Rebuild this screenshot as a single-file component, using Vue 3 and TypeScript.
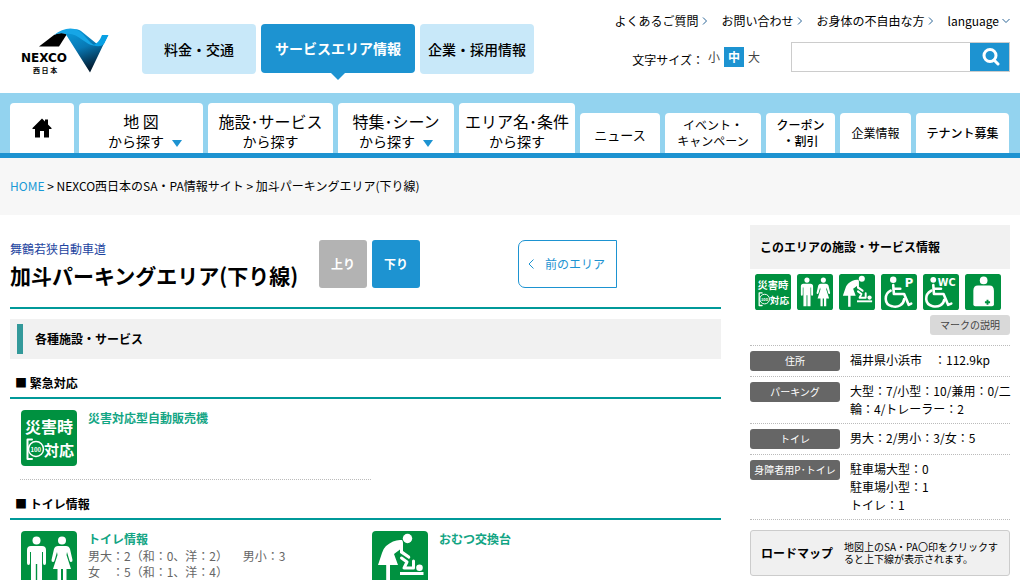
<script setup lang="ts">
import { ref, h, type FunctionalComponent } from 'vue'

type IconName = 'disaster' | 'toilet' | 'diaper' | 'parking' | 'wc' | 'ostomate'

interface NavItem {
  lines: string[]
  size: string
  grow: number
  arrow?: boolean
}

const keyword = ref('')

const helpLinks = ['よくあるご質問', 'お問い合わせ', 'お身体の不自由な方']

const navItems: NavItem[] = [
  { lines: ['地 図', 'から探す'], size: 'tall map', grow: 124, arrow: true },
  { lines: ['施設･サービス', 'から探す'], size: 'tall', grow: 125 },
  { lines: ['特集･シーン', 'から探す'], size: 'tall', grow: 116, arrow: true },
  { lines: ['エリア名･条件', 'から探す'], size: 'tall', grow: 116 },
  { lines: ['ニュース'], size: 'short news', grow: 80 },
  { lines: ['イベント・', 'キャンペーン'], size: 'short', grow: 96 },
  { lines: ['クーポン', '・割引'], size: 'short strong', grow: 69 },
  { lines: ['企業情報'], size: 'short', grow: 71 },
  { lines: ['テナント募集'], size: 'short strong', grow: 93 },
]

const areaIcons: { name: IconName; label: string }[] = [
  { name: 'disaster', label: '災害対応型自動販売機' },
  { name: 'toilet', label: 'トイレ' },
  { name: 'diaper', label: 'おむつ交換台' },
  { name: 'parking', label: '身障者用駐車場' },
  { name: 'wc', label: '身障者用トイレ' },
  { name: 'ostomate', label: 'オストメイト' },
]

const details = [
  { label: '住所', lines: ['福井県小浜市　：112.9kp'] },
  { label: 'パーキング', lines: ['大型：7/小型：10/兼用：0/二', '輪：4/トレーラー：2'] },
  { label: 'トイレ', lines: ['男大：2/男小：3/女：5'] },
  { label: '身障者用P･トイレ', lines: ['駐車場大型：0', '駐車場小型：1', 'トイレ：1'] },
]

const sections: {
  title: string
  ruled: boolean
  items: { icon: IconName; name: string; lines: string[] }[]
}[] = [
  {
    title: '緊急対応',
    ruled: true,
    items: [{ icon: 'disaster', name: '災害対応型自動販売機', lines: [] }],
  },
  {
    title: 'トイレ情報',
    ruled: false,
    items: [
      {
        icon: 'toilet',
        name: 'トイレ情報',
        lines: ['男大：2（和：0、洋：2） 　男小：3', '女　：5（和：1、洋：4）'],
      },
      { icon: 'diaper', name: 'おむつ交換台', lines: [] },
    ],
  },
]

const p = (d: string) => h('path', { d, fill: '#fff' })
const c = (cx: number, cy: number, r: number) => h('circle', { cx, cy, r, fill: '#fff' })
const s = (d: string, w: number) =>
  h('path', { d, fill: 'none', stroke: '#fff', 'stroke-width': w, 'stroke-linecap': 'round', 'stroke-linejoin': 'round' })
const t = (x: number, y: number, size: number, text: string, family?: string) =>
  h('text', { x, y, 'font-size': size, 'font-family': family, 'font-weight': 700, fill: '#fff' }, text)

const wheelchair = () => [
  c(19, 9, 5),
  s('M19 17 L20 31 L36 31 L43 48 L47 46', 4),
  s('M20 23 L30 23', 4),
  s('M15 26 C5 31 4 47 17 50 C26 53 35 48 36 39', 4),
]

const drawings: Record<IconName, () => ReturnType<typeof h>[]> = {
  disaster: () => [
    t(4, 23, 16, '災害時'),
    t(23, 46, 15, '対応'),
    s('M11 29.5 L6.500 29.5 L6.500 49 L11 49', 2),
    h('circle', { cx: 15, cy: 39, r: 7.5, fill: 'none', stroke: '#fff', 'stroke-width': 1.5 }),
    t(9.5, 42, 6, '100'),
  ],
  toilet: () => [
    c(15.5, 9.5, 4),
    p('M10 15 H21 Q25 15 25 19 V32 Q25 34 23.5 34 Q22 34 22 32 V21 H21 V50 H16.2 V33 H14.8 V50 H10 V21 H9 V32 Q9 34 7.5 34 Q6 34 6 32 V19 Q6 15 10 15Z'),
    c(41, 9.5, 4),
    p('M37 15 H45 Q48 15 49 18 L51.5 29 Q51.7 31 50 31 Q49 31 48.5 29.5 L46 21 L45.5 24 L50 38 H45.5 V50 H42 V38 H40 V50 H36.5 V38 H32 L36.5 24 L36 21 L33.5 29.5 Q33 31 32 31 Q30.3 31 30.5 29 L33 18 Q34 15 37 15Z'),
  ],
  diaper: () => [
    c(35.5, 7.5, 4.7),
    p('M30 9 Q22 8 14 15 Q11 18 10 22 L6 34 H14.2 V51 H18 V34 H26 L22 23 L28 18.5 V22 L37 28 Q39 27 38 25 L31 20 L31 12 Q31 10 30 9Z'),
    s('M29.5 27 L35 31 L32 37 H41.5 V30', 3),
    c(47.5, 36.7, 3.3),
    p('M28 41 H51.5 V44 H28Z'),
  ],
  parking: () => [...wheelchair(), t(37, 20, 18, 'P', 'DejaVu Sans')],
  wc: () => [
    c(16, 9, 4.5),
    s('M16 17 L17 31 L32 31 L39 48 L44 46', 4),
    s('M17 23 L28 23', 4),
    s('M13 26 C2 32 2 47 15 50 C24 52 32 48 33 40', 4),
    t(23, 19, 15, 'WC', 'DejaVu Sans'),
  ],
  ostomate: () => [
    c(29, 10, 6),
    p('M20 18 H38 Q45 18 45 26 V47 Q45 50 42 50 H16 Q13 50 13 47 V26 Q13 18 20 18Z'),
    h('path', { d: 'M35 40 V48 M31 44 H39', stroke: '#009140', 'stroke-width': 3 }),
  ],
}

const ServiceIcon: FunctionalComponent<{ name: IconName; label?: string }> = (props) =>
  h(
    'svg',
    { viewBox: '0 0 56 56', role: 'img', 'aria-label': props.label },
    [h('rect', { width: 56, height: 56, rx: 4, fill: '#009140' }), ...drawings[props.name]()],
  )
ServiceIcon.props = ['name', 'label']
</script>

<template>
  <div class="page">
    <header class="header">
      <a class="logo" href="#" aria-label="NEXCO 西日本">
        <svg viewBox="0 0 90 48" width="90" height="48">
          <defs>
            <linearGradient id="ribbon" x1="0" y1="0" x2="0.35" y2="1">
              <stop offset="0" stop-color="#0a9fe0" />
              <stop offset="0.5" stop-color="#0878b4" />
              <stop offset="1" stop-color="#031c30" />
            </linearGradient>
          </defs>
          <path d="M18 20.500 L33 9 Q39 5.500 46 8 L38 20.500Z" fill="#000" />
          <path d="M44 7 C50 3 56 2 60 5 L76 18 Q82 16 84 11 L87 9 L69 46.500Z" fill="url(#ribbon)" />
          <path d="M33 9 C41 3 50 0 58 5 C64 9 68 17 74 19.500 C66 21 57 6 45 8 Q39 6 33 9Z" fill="#16a6e6" />
          <path d="M72 19 Q78 17 81 9 H87.500 L83 18 Q79 22 72 19Z" fill="#08a0e4" />
          <text class="logo-name" x="0" y="36">NEXCO</text>
          <text class="logo-sub" x="12" y="47">西 日 本</text>
        </svg>
      </a>
      <nav class="site-tabs" aria-label="サイト">
        <a href="#" class="site-tab">料金・交通</a>
        <a href="#" class="site-tab current">サービスエリア情報</a>
        <a href="#" class="site-tab">企業・採用情報</a>
      </nav>
      <div class="tools">
        <div class="help">
          <a v-for="link in helpLinks" :key="link" href="#">{{ link }}
            <svg width="6" height="8" viewBox="0 0 6 8"><path d="M1 .5 4.500 4 1 7.500" /></svg>
          </a>
          <a class="language" href="#">language
            <svg width="8" height="6" viewBox="0 0 8 6"><path d="M.5 1 4 4.500 7.500 1" /></svg>
          </a>
        </div>
        <div class="controls">
          <div class="sizes" role="group" aria-label="文字サイズ">
            <span class="sizes-label">文字サイズ：</span>
            <button type="button">小</button>
            <button type="button" class="on">中</button>
            <button type="button">大</button>
          </div>
          <form class="search" role="search" @submit.prevent>
            <input v-model="keyword" type="text" aria-label="サイト内検索" />
            <button type="submit" aria-label="検索">
              <svg width="18" height="18" viewBox="0 0 18 18">
                <circle cx="8" cy="7.500" r="6" />
                <path d="M12 12 16 16" />
              </svg>
            </button>
          </form>
        </div>
      </div>
    </header>

    <nav class="nav" aria-label="メイン">
      <a href="#" class="tab home" :style="{ flexGrow: 64 }" aria-label="ホーム">
        <svg width="20" height="20" viewBox="0 0 20 20">
          <path d="M10 .5 13 3.500 V1.500 H16 V6.500 L19.500 10 V11 H17 V19.500 H12 V13 H8 V19.500 H3 V11 H.5 V10Z" fill="#000" />
        </svg>
      </a>
      <a
        v-for="item in navItems"
        :key="item.lines.join('')"
        href="#"
        class="tab"
        :class="[item.size, { arrowed: item.arrow }]"
        :style="{ flexGrow: item.grow }"
      >
        <span v-for="line in item.lines" :key="line">{{ line }}</span>
      </a>
    </nav>

    <div class="crumbs">
      <a href="#">HOME</a> &gt; NEXCO西日本のSA・PA情報サイト &gt; 加斗パーキングエリア(下り線)
    </div>

    <div class="columns">
      <main>
        <div class="title">
          <div class="title-text">
            <p>舞鶴若狭自動車道</p>
            <h1>加斗パーキングエリア(下り線)</h1>
          </div>
          <div class="directions">
            <a href="#" class="up">上り</a>
            <a href="#">下り</a>
          </div>
          <a href="#" class="previous">
            <svg width="6" height="10" viewBox="0 0 6 10"><path d="M5.500 .5 1 5 5.500 9.500" /></svg>
            前のエリア
          </a>
        </div>

        <h2>各種施設・サービス</h2>

        <section v-for="section in sections" :key="section.title">
          <h3>■ {{ section.title }}</h3>
          <div class="items">
            <div
              v-for="item in section.items"
              :key="item.name"
              class="item"
              :class="{ ruled: section.ruled }"
            >
              <ServiceIcon class="big-icon" :name="item.icon" :label="item.name" />
              <div>
                <h4>{{ item.name }}</h4>
                <p v-for="line in item.lines" :key="line">{{ line }}</p>
              </div>
            </div>
          </div>
        </section>
      </main>

      <aside>
        <h2 class="side-title">このエリアの施設・サービス情報</h2>
        <div class="icons">
          <ServiceIcon
            v-for="icon in areaIcons"
            :key="icon.name"
            class="small-icon"
            :name="icon.name"
            :label="icon.label"
          />
        </div>
        <a href="#" class="marks">マークの説明</a>
        <dl>
          <div v-for="row in details" :key="row.label" class="row">
            <dt>{{ row.label }}</dt>
            <dd>
              <span v-for="line in row.lines" :key="line">{{ line }}</span>
            </dd>
          </div>
        </dl>
        <a href="#" class="roadmap">
          <strong>ロードマップ</strong>
          <span>地図上のSA・PA〇印をクリックすると上下線が表示されます。</span>
        </a>
      </aside>
    </div>
  </div>
</template>

<style>
html {
  scrollbar-width: none;
}
</style>

<style scoped>
.page {
  font-family: "Noto Sans CJK JP", "Noto Sans", sans-serif;
  font-size: 12px;
  line-height: 18px;
  color: #000;
  background: #fff;
}

a {
  color: inherit;
  text-decoration: none;
}

h1,
h2,
h3,
h4,
p,
dl,
dd {
  margin: 0;
}

button,
input {
  box-sizing: border-box;
  margin: 0;
  padding: 0;
  border: 0;
  font: inherit;
}

.header {
  display: flex;
  align-items: flex-start;
  height: 93px;
  padding: 0 10px;
  box-sizing: border-box;
}

.logo {
  margin: 26px 31px 0 11px;
  line-height: 0;
}

.logo-name {
  font: bold 12px "DejaVu Sans", sans-serif;
}

.logo-sub {
  font-size: 7px;
  font-weight: 700;
}

.site-tabs {
  display: flex;
  gap: 5px;
  margin-top: 24px;
}

.site-tab {
  position: relative;
  width: 114px;
  line-height: 50px;
  border-radius: 4px;
  background: #c8e8f9;
  font-size: 14px;
  font-weight: 500;
  text-align: center;
}

.current {
  width: 154px;
  height: 49px;
  background: #1d93d1;
  color: #fff;
  font-weight: 700;
  line-height: 48px;
}

.current::after {
  content: "";
  position: absolute;
  top: 100%;
  left: 50%;
  margin-left: -7px;
  border: 7px solid transparent;
  border-top-color: #1d93d1;
  border-bottom: 0;
}

.tools {
  display: flex;
  flex-direction: column;
  align-items: flex-end;
  gap: 12px;
  margin-left: auto;
  padding-top: 12px;
}

.help {
  display: flex;
  gap: 13px;
}

.help a {
  display: flex;
  align-items: center;
  gap: 4px;
}

.help .language {
  gap: 3px;
}

.help path {
  fill: none;
  stroke: #2b6596;
}

.controls {
  display: flex;
  gap: 31px;
}

.sizes {
  display: flex;
  gap: 4px;
  padding-top: 5px;
}

.sizes-label {
  line-height: 26px;
}

.sizes button {
  height: 20px;
  background: none;
  color: #444;
}

.sizes .on {
  width: 20px;
  background: #1d93d1;
  color: #fff;
  font-weight: 700;
}

.search {
  display: flex;
  height: 30px;
  box-sizing: border-box;
  border: 1px solid #ccc;
}

.search input {
  width: 178px;
}

.search button {
  display: flex;
  align-items: center;
  justify-content: center;
  width: 39px;
  background: #1d93d1;
}

.search svg {
  margin-left: 3px;
  fill: none;
  stroke: #fff;
  stroke-width: 3;
  stroke-linecap: round;
}

.nav {
  display: flex;
  align-items: flex-end;
  gap: 5px;
  height: 60px;
  padding: 0 11px 0 10px;
  border-bottom: 5px solid #1d93d1;
  background: #93d3ef;
}

.tab {
  display: flex;
  flex: 1 1 0;
  flex-direction: column;
  align-items: center;
  justify-content: center;
  min-width: 0;
  box-sizing: border-box;
  border-radius: 4px 4px 0 0;
  background: #fff;
  white-space: nowrap;
}

.home {
  height: 50px;
}

.tall {
  height: 50px;
  padding-top: 4px;
  font-size: 14px;
  line-height: 18px;
}

.tall span:first-child {
  font-size: 16px;
  line-height: 22px;
}

.arrowed span:last-child {
  display: flex;
  align-items: center;
  gap: 8px;
}

.arrowed span:last-child::after {
  content: "";
  margin-top: 4px;
  border: 5px solid transparent;
  border-top: 7px solid #1d93d1;
  border-bottom: 0;
}

.map span:last-child {
  padding-left: 8px;
}

.short {
  height: 40px;
  line-height: 16px;
}

.news {
  padding-top: 4px;
  font-size: 13px;
}

.strong {
  font-weight: 500;
}

.crumbs {
  padding: 19px 10px 20px;
  background: #f7f7f7;
}

.crumbs a {
  color: #1a9ad6;
}

.columns {
  display: grid;
  grid-template-columns: minmax(0, 1fr) 260px;
  gap: 29px;
  padding: 10px 10px 0;
}

.title {
  display: flex;
  align-items: flex-start;
  height: 67px;
  padding-top: 15px;
  border-bottom: 2px solid #009999;
}

.title-text {
  width: 309px;
  white-space: nowrap;
}

.title-text p {
  color: #1d44a0;
}

h1 {
  font-size: 21px;
  line-height: 34px;
}

.directions {
  display: flex;
  gap: 5px;
}

.directions a {
  width: 48px;
  border-radius: 3px;
  background: #1d93d1;
  color: #fff;
  font-weight: 700;
  line-height: 48px;
  text-align: center;
}

.directions .up {
  background: #b3b3b3;
}

.previous {
  display: flex;
  align-items: center;
  gap: 11px;
  width: 99px;
  height: 48px;
  margin-left: 98px;
  padding-left: 9px;
  box-sizing: border-box;
  border: 1px solid #1d93d1;
  border-radius: 7px 0 0 7px;
  color: #1d93d1;
  white-space: nowrap;
}

.previous path {
  fill: none;
  stroke: #1d93d1;
}

h2 {
  display: flex;
  align-items: center;
  gap: 12px;
  height: 40px;
  margin-top: 10px;
  padding-left: 7px;
  background: #f1f1f1;
  font-size: 12px;
}

h2::before {
  content: "";
  width: 6px;
  height: 30px;
  background: #33999a;
}

h3 {
  padding: 15px 5px 5px;
  border-bottom: 2px solid #009999;
  font-size: 12px;
}

.items {
  display: grid;
  grid-template-columns: 351px 351px;
  padding-left: 10px;
}

.item {
  display: flex;
  gap: 11px;
  padding: 11px 0 13px 1px;
  line-height: 16px;
  color: #666;
}

.ruled {
  border-bottom: 1px dotted #bbb;
}

h4 {
  margin-bottom: 1px;
  color: #13a584;
  font-size: 12px;
}

.big-icon {
  flex: none;
  width: 56px;
  height: 56px;
}

.side-title {
  height: 44px;
  margin: 0;
  padding-left: 10px;
}

.side-title::before {
  content: none;
}

.icons {
  display: flex;
  gap: 6px;
  padding: 5px;
}

.small-icon {
  width: 36px;
  height: 36px;
}

.marks {
  display: block;
  width: 80px;
  margin: 0 0 10px auto;
  border-radius: 3px;
  background: #d9d9d9;
  color: #444;
  font-size: 10px;
  line-height: 20px;
  text-align: center;
}

dl {
  border-top: 1px dotted #bbb;
}

.row {
  display: flex;
  gap: 10px;
  padding: 5px 0;
  min-height: 20px;
  border-bottom: 1px dotted #bbb;
}

dt {
  width: 90px;
  height: 20px;
  flex: none;
  border-radius: 3px;
  background: #666;
  color: #fff;
  font-size: 10px;
  line-height: 20px;
  text-align: center;
}

dd span {
  display: block;
  white-space: nowrap;
}

.roadmap {
  display: flex;
  align-items: center;
  gap: 11px;
  height: 44px;
  margin-top: 10px;
  padding: 0 8px 0 10px;
  border: 1px solid #ccc;
  border-radius: 3px;
  background: #f0f0f0;
}

.roadmap strong {
  flex: none;
}

.roadmap span {
  font-size: 10px;
  line-height: 12px;
}
</style>
